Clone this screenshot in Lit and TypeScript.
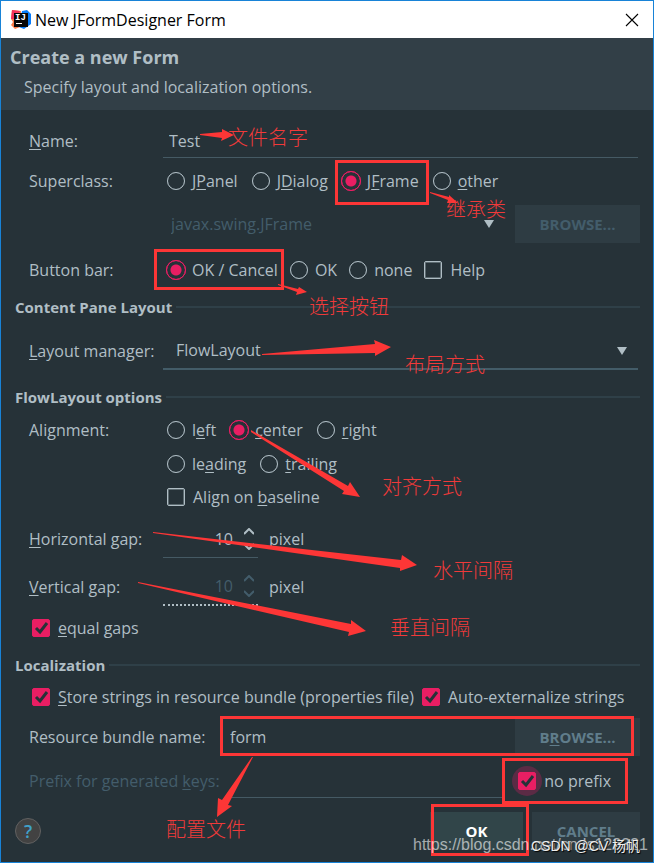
import { LitElement, html, css, svg, nothing } from "lit";
import { customElement } from "lit/decorators.js";

type Choice = { before?: string; key?: string; after: string; on?: boolean };

const label = (c: Choice) =>
  html`<span>${c.before ?? ""}${c.key ? html`<u>${c.key}</u>` : nothing}${c.after}</span>`;

const radio = (name: string, c: Choice) =>
  html`<label class="choice"><input type="radio" name=${name} ?checked=${c.on ?? false} />${label(c)}</label>`;

const check = (c: Choice, cls = "") =>
  html`<label class="choice check ${cls}"><span class="tick"><input type="checkbox" ?checked=${c.on ?? false} /><svg viewBox="0 0 18 18" aria-hidden="true"><path d="M4 9 L8 13 L15 4" /></svg></span>${label(c)}</label>`;

const notes = [
  { x: 228, y: 126, text: "文件名字" },
  { x: 446, y: 198, text: "继承类" },
  { x: 309, y: 295, text: "选择按钮" },
  { x: 405, y: 353, text: "布局方式" },
  { x: 382, y: 475, text: "对齐方式" },
  { x: 433, y: 559, text: "水平间隔" },
  { x: 390, y: 616, text: "垂直间隔" },
  { x: 166, y: 818, text: "配置文件" },
];

const arrows = [
  "200,134 222,132 222,129 234,135 221,141 222,138 200,135",
  "430,192 449,197 449,195 458,203 447,203 448,200 430,193",
  "278,284 298,289 299,287 307,292 296,295 297,292 278,285",
  "262,354 375,344 374,340 391,347 375,356 375,353 262,355",
  "251,430 348,486 350,482 360,497 342,494 344,491 251,432",
  "153,532 401,560 402,555 417,565 400,571 400,568 153,533",
  "138,582 351,624 351,620 366,631 348,636 349,632 138,583",
  "253,757 228,805 232,806 217,817 218,798 222,800 252,757",
];

const frames = [
  [335, 160, 94, 45],
  [154, 249, 130, 41],
  [220, 716, 414, 40],
  [502, 758, 126, 46],
  [431, 804, 98, 52],
];

@customElement("app-root")
export class AppRoot extends LitElement {
  static styles = css`
    :host {
      display: block;
      position: relative;
      box-sizing: border-box;
      min-height: 100vh;
      border: 1px solid #1883d7;
      background: #263238;
      color: #b0bec5;
      font: 16px/20px "Open Sans", "Noto Sans", "Noto Sans CJK SC", sans-serif;
    }
    * { box-sizing: border-box; }
    input, select, button { font: inherit; color: inherit; margin: 0; padding: 0; border: 0; background: none; border-radius: 0; outline: 0; }
    u { text-decoration: underline; text-underline-offset: 2px; }
    .titlebar { display: flex; align-items: center; height: 37px; padding: 0 14px 0 9px; background: #fff; color: #000; gap: 4px; }
    .titlebar .name { flex: 1; }
    .titlebar svg { display: block; }
    .header { height: 72px; padding: 9px 9px 0; background: #323f47; }
    .header h1 { margin: 0 0 10px; font-size: 18px; line-height: 20px; font-weight: 700; }
    .header p { margin: 0; padding-left: 14px; }
    .form { padding: 14px 13px 12px 14px; }
    .row { display: grid; grid-template-columns: 134px 1fr; align-items: center; padding-left: 14px; height: 34px; }
    .row.tall { height: 38px; }
    .row.super { height: 45px; }
    .row.combo { height: 41px; }
    .row.bar { height: 52px; }
    .row.base { height: 32px; }
    .row.equal { height: 44px; }
    .row.wide { grid-template-columns: 192px 1fr; }
    .row.strings { display: flex; gap: 8px; padding-left: 17px; }
    .row.equal { display: flex; padding-left: 17px; }
    .mt4 { margin-top: 4px; }
    .mt5 { margin-top: 5px; }
    .mt7 { margin-top: 7px; }
    .mt8 { margin-top: 8px; }
    .mt10 { margin-top: 10px; }
    .mt14 { margin-top: 14px; }
    .mt16 { margin-top: 16px; }
    .choices { display: flex; align-items: center; gap: 14px; padding-left: 4px; }
    .bar .choices { gap: 12px; }
    .choice { display: flex; align-items: center; gap: 7px; white-space: nowrap; }
    .check { gap: 8px; }
    .choice input { appearance: none; display: block; width: 18px; height: 18px; border: 1px solid #b0bec5; }
    .choice input[type="radio"] { border-radius: 50%; outline: 1px solid #b0bec544; outline-offset: -1px; }
    .choice input[type="radio"]:checked { border-color: #e91e63; outline-color: #e91e63; background: radial-gradient(circle, #e91e63 5px, transparent 6px); width: 20px; height: 20px; margin: 0 -1px; }
    .tick { position: relative; display: grid; width: 18px; height: 18px; }
    .tick input { border-radius: 2px; box-shadow: inset 0 0 0 1px #b0bec566; }
    .tick input:checked { background: #e91e63; border-color: #e91e63; box-shadow: none; }
    .tick svg { position: absolute; inset: 0; width: 18px; height: 18px; fill: none; stroke: #263238; stroke-width: 3; pointer-events: none; }
    .tick input:not(:checked) + svg { display: none; }
    .focus .tick::before { content: ""; position: absolute; inset: -6px; border-radius: 50%; background: #5b2b45; }
    .focus .tick input { position: relative; }
    .line { width: 100%; height: 100%; padding-left: 6px; border-bottom: 1px solid #455a64; }
    .name-field { display: flex; height: 100%; padding-right: 2px; }
    .group { display: flex; align-items: center; gap: 4px; height: 22px; }
    .group h2 { margin: 0; font-size: 15px; line-height: 22px; font-weight: 700; }
    .group::after { content: ""; flex: 1; height: 2px; background: #2f4048; }
    .select { position: relative; display: flex; height: 100%; flex: 1; align-items: center; }
    .select select { appearance: none; width: 100%; height: 100%; opacity: 1; }
    .select svg { position: absolute; right: 10px; fill: #b0bec5; pointer-events: none; }
    .combo .select { padding-left: 8px; color: #435d6b; }
    .combo .select svg { right: 4px; }
    .manager { border-bottom: 2px solid #435c68; padding-left: 13px; margin-right: 2px; }
    .browse-pair { display: flex; gap: 16px; height: 38px; }
    .push { width: 125px; height: 38px; background: #2e3c43; color: #607d8b; font-size: 15px; font-weight: 700; text-align: center; }
    .push:disabled { color: #435d6b; }
    .spin { display: flex; align-items: center; height: 100%; gap: 11px; }
    .spinner { display: flex; align-items: center; width: 95px; height: 100%; border-bottom: 1px solid #455a64; }
    .spinner input { width: 70px; text-align: right; }
    .spinner .steps { display: grid; gap: 8px; margin-left: 11px; }
    .spinner button { display: block; width: 10px; height: 7px; }
    .spinner svg { display: block; fill: none; stroke: #b0bec5; stroke-width: 2; }
    .spinner.off { color: #435d6b; border-bottom: 2px dotted #b0bec5; }
    .spinner.off svg { stroke: #435d6b; }
    .bundle { display: flex; height: 100%; }
    .bundle input { flex: 1; min-width: 0; padding-left: 9px; }
    .prefix { display: flex; height: 100%; gap: 14px; }
    .prefix .line { flex: 1; margin-left: 11px; width: auto; min-width: 0; }
    .prefix .choice { padding-right: 29px; }
    .off-text { color: #435d6b; white-space: nowrap; }
    .actions { display: flex; align-items: center; height: 38px; gap: 9px; }
    .help { width: 26px; height: 26px; margin-right: auto; border: 1px solid #616161; border-radius: 50%; background: #424242; color: #40a0c8; font-weight: 600; font-size: 18px; line-height: 22px; }
    .actions .push { width: 108px; }
    .actions .primary { width: 93px; background: #314549; color: #fff; }
    .marks { position: absolute; left: -1px; top: -1px; width: 654px; height: 863px; pointer-events: none; overflow: visible; }
    .marks rect { fill: none; stroke: #fd3636; stroke-width: 3; }
    .marks polygon { fill: #fd3636; }
    .marks text { fill: #f03a3a; font: 300 20px "Noto Sans CJK SC", sans-serif; }
    .marks .site { fill: #ffffff99; font: 16px "Liberation Sans", sans-serif; }
    .marks .author { fill: #eee; font: 14px "Liberation Sans", "Noto Sans CJK SC", sans-serif; text-shadow: 1px 1px 1px #000; }
  `;

  private chevron(up: boolean) {
    return html`<svg width="10" height="7" viewBox="0 0 10 7" aria-hidden="true"><path d=${up ? "M0 6 L5 1 L10 6" : "M0 1 L5 6 L10 1"} /></svg>`;
  }

  private spinner(id: string, off: boolean) {
    return html`<div class="spin">
      <div class="spinner ${off ? "off" : ""}">
        <input id=${id} value="10" ?disabled=${off} />
        <div class="steps">
          <button type="button" aria-label="Increase" ?disabled=${off}>${this.chevron(true)}</button>
          <button type="button" aria-label="Decrease" ?disabled=${off}>${this.chevron(false)}</button>
        </div>
      </div>
      <span>pixel</span>
    </div>`;
  }

  private triangle() {
    return html`<svg width="12" height="9" viewBox="0 0 12 9" aria-hidden="true"><path d="M1 1 H11 L6 9 Z" /></svg>`;
  }

  render() {
    return html`
      <div class="titlebar">
        <svg width="21" height="21" viewBox="0 0 21 21" aria-hidden="true">
          <path d="M2 1 L11 2 L10 18 L5 20 L1 16 L3 13 L1 10 Z" fill="#fc7a45" />
          <path d="M2 1 L10 2 L6 10 L1 10 Z" fill="#f2335d" />
          <path d="M12 2 L17 1 L21 5 L21 15 L14 20 L9 18 Z" fill="#087cfa" />
          <rect x="4" y="4" width="14" height="14" fill="#080808" />
          <text x="5" y="11" fill="#fff" font-family="Liberation Mono" font-weight="700" font-size="9">IJ</text>
          <rect x="6" y="14" width="6" height="1" fill="#fff" />
        </svg>
        <span class="name">New JFormDesigner Form</span>
        <button type="button" aria-label="Close">
          <svg width="14" height="14" viewBox="0 0 14 14"><path d="M1 1 L13 13 M13 1 L1 13" stroke="#000" stroke-width="1.1" /></svg>
        </button>
      </div>
      <header class="header">
        <h1>Create a new Form</h1>
        <p>Specify layout and localization options.</p>
      </header>
      <form class="form">
        <div class="row">
          <label for="name"><u>N</u>ame:</label>
          <div class="name-field"><input id="name" class="line" value="Test" /></div>
        </div>
        <div class="row super">
          <span>Superclass:</span>
          <div class="choices">
            ${radio("super", { before: "J", key: "P", after: "anel" })}
            ${radio("super", { before: "J", key: "D", after: "ialog" })}
            ${radio("super", { before: "J", key: "F", after: "rame", on: true })}
            ${radio("super", { key: "o", after: "ther" })}
          </div>
        </div>
        <div class="row combo">
          <span></span>
          <div class="browse-pair">
            <div class="select">
              <select aria-label="Superclass name"><option>javax.swing.JFrame</option></select>
              ${this.triangle()}
            </div>
            <button type="button" class="push" disabled>BROWSE...</button>
          </div>
        </div>
        <div class="row bar">
          <span>Button bar:</span>
          <div class="choices">
            ${radio("bar", { after: "OK / Cancel", on: true })}
            ${radio("bar", { after: "OK" })}
            ${radio("bar", { after: "none" })}
            ${check({ after: "Help" })}
          </div>
        </div>
        <div class="group"><h2>Content Pane Layout</h2></div>
        <div class="row tall mt14">
          <label for="manager"><u>L</u>ayout manager:</label>
          <div class="select manager">
            <select id="manager"><option>FlowLayout</option></select>
            ${this.triangle()}
          </div>
        </div>
        <div class="group mt16"><h2>FlowLayout options</h2></div>
        <div class="row mt5">
          <span>Alignment:</span>
          <div class="choices">
            ${radio("align", { before: "l", key: "e", after: "ft" })}
            ${radio("align", { key: "c", after: "enter", on: true })}
            ${radio("align", { key: "r", after: "ight" })}
          </div>
        </div>
        <div class="row">
          <span></span>
          <div class="choices">
            ${radio("align", { before: "le", key: "a", after: "ding" })}
            ${radio("align", { key: "t", after: "railing" })}
          </div>
        </div>
        <div class="row base">
          <span></span>
          <div class="choices">${check({ before: "Align on ", key: "b", after: "aseline" })}</div>
        </div>
        <div class="row tall mt7">
          <label for="hgap"><u>H</u>orizontal gap:</label>
          ${this.spinner("hgap", false)}
        </div>
        <div class="row tall mt10">
          <label for="vgap"><u>V</u>ertical gap:</label>
          ${this.spinner("vgap", true)}
        </div>
        <div class="row equal">${check({ key: "e", after: "qual gaps", on: true })}</div>
        <div class="group mt4"><h2>Localization</h2></div>
        <div class="row strings mt4">
          ${check({ key: "S", after: "tore strings in resource bundle (properties file)", on: true })}
          ${check({ after: "Auto-externalize strings", on: true })}
        </div>
        <div class="row wide tall mt4">
          <label for="bundle">Resource bundle name:</label>
          <div class="bundle">
            <input id="bundle" value="form" />
            <button type="button" class="push">B<u>R</u>OWSE...</button>
          </div>
        </div>
        <div class="row wide mt8">
          <label for="prefix" class="off-text">Prefix for generated <u>k</u>eys:</label>
          <div class="prefix">
            <input id="prefix" class="line" disabled />
            ${check({ before: "no pref", key: "i", after: "x", on: true }, "focus")}
          </div>
        </div>
        <div class="actions mt14">
          <button type="button" class="help" aria-label="Help">?</button>
          <button type="button" class="push primary">OK</button>
          <button type="button" class="push">CANCEL</button>
        </div>
      </form>
      <svg class="marks" viewBox="0 0 654 863">
        ${frames.map(([x, y, w, h]) => svg`<rect x=${x + 1.5} y=${y + 1.5} width=${w - 3} height=${h - 3} />`)}
        ${arrows.map((p) => svg`<polygon points=${p} />`)}
        ${notes.map((n) => svg`<text x=${n.x} y=${n.y + 19}>${n.text}</text>`)}
        <text class="site" x="413" y="850">https://blog.csdn.net/cnds123321</text>
        <text class="author" x="531" y="851">CSDN @CV 杨帆</text>
      </svg>
    `;
  }
}
